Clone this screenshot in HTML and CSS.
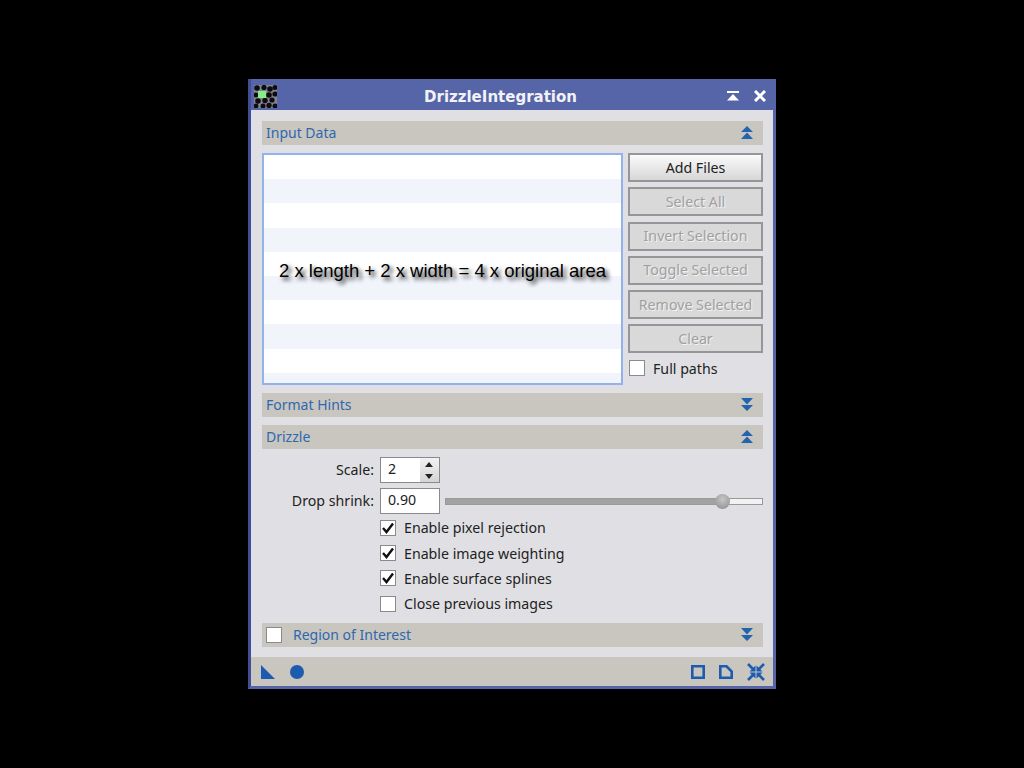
FILE: index.html
```html
<!DOCTYPE html>
<html lang="en">
<head>
  <meta charset="UTF-8" />
  <title>DrizzleIntegration</title>
  <link rel="stylesheet" href="styles.css">
</head>
<body>

  <div class="window">
    <div class="titlebar">
      <svg class="app-icon" width="23" height="23" viewBox="0 0 23 23">
        <rect width="23" height="23" fill="#84848f"/>
        <g fill="#0c0c10">
          <circle cx="3" cy="3" r="2.800"/><circle cx="10" cy="2.500" r="2.600"/><circle cx="16" cy="4" r="2.800"/><circle cx="21" cy="2.500" r="2.500"/>
          <circle cx="2" cy="10" r="2.400"/><circle cx="15" cy="10" r="2.800"/><circle cx="21" cy="9" r="2.600"/>
          <circle cx="4" cy="16" r="2.800"/><circle cx="11" cy="15.500" r="2.700"/><circle cx="18" cy="15" r="2.600"/>
          <circle cx="2" cy="21" r="2.400"/><circle cx="9" cy="21" r="2.500"/><circle cx="15" cy="20.500" r="2.700"/><circle cx="21" cy="21" r="2.500"/>
        </g>
        <rect x="4" y="6" width="8" height="7" fill="#86ee86"/>
      </svg>
      <span class="title">DrizzleIntegration</span>
      <svg class="shade-btn" width="12" height="10" viewBox="0 0 12 10">
        <path fill="#fff" d="M0 0H12V2H0Z M6 3L12 9.500H0Z"/>
      </svg>
      <svg width="12" height="12" viewBox="0 0 12 12">
        <path stroke="#fff" stroke-width="3" d="M1 1L11 11M11 1L1 11"/>
      </svg>
    </div>

    <div class="content">
      <div class="section-bar">
        <span class="section-title">Input Data</span>
        <svg width="12" height="13" viewBox="0 0 12 13"><path fill="#2463ad" d="M6 0L12 6H0Z M6 6.500L12 13H0Z"/></svg>
      </div>

      <div class="input-data">
        <div class="file-list">
          <div class="overlay-text">2 x length + 2 x width = 4 x original area</div>
        </div>
        <div class="side">
          <button class="btn">Add Files</button>
          <button class="btn" disabled>Select All</button>
          <button class="btn" disabled>Invert Selection</button>
          <button class="btn" disabled>Toggle Selected</button>
          <button class="btn" disabled>Remove Selected</button>
          <button class="btn" disabled>Clear</button>
          <div class="check-row full-paths"><span class="check"></span><span>Full paths</span></div>
        </div>
      </div>

      <div class="section-bar">
        <span class="section-title">Format Hints</span>
        <svg width="12" height="13" viewBox="0 0 12 13"><path fill="#2463ad" d="M0 0H12L6 6.500Z M0 7H12L6 13Z"/></svg>
      </div>

      <div class="section-bar">
        <span class="section-title">Drizzle</span>
        <svg width="12" height="13" viewBox="0 0 12 13"><path fill="#2463ad" d="M6 0L12 6H0Z M6 6.500L12 13H0Z"/></svg>
      </div>

      <div class="drizzle">
        <div class="field-row">
          <label class="field-label">Scale:</label>
          <div class="spin">
            <span class="field-value">2</span>
            <div class="spin-btns">
              <span class="spin-up"></span>
              <span class="spin-down"></span>
            </div>
          </div>
        </div>
        <div class="field-row shrink-row">
          <label class="field-label">Drop shrink:</label>
          <div class="spin"><span class="field-value">0.90</span></div>
          <div class="slider">
            <div class="slider-fill"></div>
            <div class="slider-handle"></div>
          </div>
        </div>
        <div class="checks">
          <div class="check-row"><span class="check"><svg width="14" height="12" viewBox="0 0 14 12"><path fill="none" stroke="#111" stroke-width="2.400" d="M2 6L5.500 10L12 1.500"/></svg></span><span>Enable pixel rejection</span></div>
          <div class="check-row"><span class="check"><svg width="14" height="12" viewBox="0 0 14 12"><path fill="none" stroke="#111" stroke-width="2.400" d="M2 6L5.500 10L12 1.500"/></svg></span><span>Enable image weighting</span></div>
          <div class="check-row"><span class="check"><svg width="14" height="12" viewBox="0 0 14 12"><path fill="none" stroke="#111" stroke-width="2.400" d="M2 6L5.500 10L12 1.500"/></svg></span><span>Enable surface splines</span></div>
          <div class="check-row"><span class="check"></span><span>Close previous images</span></div>
        </div>
      </div>

      <div class="section-bar roi-bar">
        <span class="check"></span>
        <span class="section-title">Region of Interest</span>
        <svg width="12" height="13" viewBox="0 0 12 13"><path fill="#2463ad" d="M0 0H12L6 6.500Z M0 7H12L6 13Z"/></svg>
      </div>
    </div>

    <div class="footer">
      <svg width="14" height="14" viewBox="0 0 14 14"><path fill="#1d5bb0" d="M0 0L14 14H0Z"/></svg>
      <svg class="dot" width="14" height="14" viewBox="0 0 14 14"><circle cx="7" cy="7" r="7" fill="#1d5bb0"/></svg>
      <div class="footer-right">
        <svg width="14" height="14" viewBox="0 0 14 14"><path fill="none" stroke="#1d5bb0" stroke-width="2.600" d="M1.300 1.300H12.700V12.700H1.300Z"/></svg>
        <svg width="14" height="14" viewBox="0 0 14 14"><path fill="none" stroke="#1d5bb0" stroke-width="2.600" d="M1.300 1.300H7.500L12.700 6.500V12.700H1.300Z"/></svg>
        <svg width="18" height="18" viewBox="0 0 18 18">
          <path fill="none" stroke="#1d5bb0" stroke-width="2.600" d="M1 1L7 7M17 1L11 7M1 17L7 11M17 17L11 11"/>
          <path fill="#1d5bb0" d="M8.500 8.500V2.500L2.500 8.500Z M9.500 8.500V2.500L15.500 8.500Z M8.500 9.500V15.500L2.500 9.500Z M9.500 9.500V15.500L15.500 9.500Z"/>
        </svg>
      </div>
    </div>
  </div>

</body>
</html>
```

FILE: styles.css
```css
body {
  margin: 0;
  height: 768px;
  box-sizing: border-box;
  padding: 79px 0 0 248px;
  background: #000;
  font-family: 'Noto Sans', sans-serif;
  font-size: 14.200px;
  color: #222;
  overflow: hidden;
}

.window {
  width: 528px;
  height: 610px;
  box-sizing: border-box;
  display: flex;
  flex-direction: column;
  background: #e0e0e4;
  border: 3px solid #5565a8;
  border-top: none;
  border-left-color: #3f4e96;
}

.titlebar {
  height: 31px;
  box-sizing: border-box;
  flex: none;
  display: flex;
  align-items: center;
  gap: 13px;
  padding: 3px 7px 0 3px;
  background: #5565a8;
}

.app-icon {
  flex: none;
}

.shade-btn {
  margin-right: 2px;
}

.title {
  flex: 1;
  text-align: center;
  color: #f2f2f6;
  font-family: 'DejaVu Sans', sans-serif;
  font-weight: bold;
  font-size: 15px;
  padding: 1px 3px 0 0;
}

.content {
  flex: 1;
  padding: 11px 10px 0 11px;
}

.section-bar {
  height: 24px;
  box-sizing: border-box;
  display: flex;
  align-items: center;
  padding: 0 10px 1px 4px;
  margin-bottom: 8px;
  background: #c8c6be;
}

.section-title {
  flex: 1;
  color: #2f68b0;
  font-size: 14px;
}

.input-data {
  display: flex;
  gap: 5px;
  height: 232px;
  margin-bottom: 8px;
}

.file-list {
  position: relative;
  width: 361px;
  box-sizing: border-box;
  border: 2px solid #92b2e9;
  background: repeating-linear-gradient(#fff 0, #fff 24.2px, #f1f4fb 24.2px, #f1f4fb 48.4px);
}

.overlay-text {
  position: absolute;
  left: 0;
  right: 0;
  top: 105px;
  text-align: center;
  font-family: 'Liberation Sans', sans-serif;
  font-size: 18.500px;
  color: #000;
  text-shadow: 3px 3px 4px #222;
}

.side {
  width: 135px;
  display: flex;
  flex-direction: column;
  gap: 5.300px;
}

.btn {
  height: 29px;
  padding: 0 0 1px;
  border: 2px solid #969696;
  background: linear-gradient(#fbfbfb, #d6d6d6);
  font-family: 'Noto Sans', sans-serif;
  font-size: 14.200px;
  color: #222;
}

.btn:disabled {
  background: #d9d9da;
  color: #a0a0a0;
  text-shadow: 1px 1px 0 #f2f2f2;
}

.check-row {
  display: flex;
  align-items: center;
  gap: 8px;
  height: 25.400px;
}

.full-paths {
  height: 19px;
  margin-left: 1px;
}

.check {
  width: 16px;
  height: 16px;
  box-sizing: border-box;
  flex: none;
  display: flex;
  align-items: center;
  justify-content: center;
  background: #fff;
  border: 1px solid #8a8a8a;
}

.drizzle {
  height: 166px;
}

.field-row {
  display: flex;
  align-items: center;
  gap: 5px;
  height: 26px;
}

.shrink-row {
  margin-top: 5px;
}

.field-label {
  width: 112px;
  text-align: right;
  margin: 0 1px 2px 0;
}

.spin {
  width: 60px;
  height: 26px;
  box-sizing: border-box;
  flex: none;
  display: flex;
  background: #fff;
  border: 1px solid #8a8a8a;
}

.field-value {
  flex: 1;
  padding-left: 7px;
  line-height: 22px;
}

.spin-btns {
  width: 19px;
  display: flex;
  flex-direction: column;
  background: linear-gradient(#f2f2f2, #d4d4d4);
}

.spin-up,
.spin-down {
  flex: 1;
  position: relative;
}

.spin-up::after,
.spin-down::after {
  content: "";
  position: absolute;
  left: 5px;
  top: 4px;
  border-left: 4.500px solid transparent;
  border-right: 4.500px solid transparent;
}

.spin-up::after {
  border-bottom: 5px solid #222;
}

.spin-down::after {
  border-top: 5px solid #222;
}

.slider {
  flex: 1;
  position: relative;
  height: 7px;
  box-sizing: border-box;
  border: 1px solid #9a9a9a;
  background: #f2f2f2;
}

.slider-fill {
  width: 277px;
  height: 100%;
  background: #a2a2a2;
}

.slider-handle {
  position: absolute;
  left: 269px;
  top: -5px;
  width: 15px;
  height: 15px;
  border-radius: 50%;
  background: radial-gradient(circle at 50% 35%, #c6c6c6, #8a8a8a);
}

.checks {
  margin: 1px 0 0 118px;
}

.roi-bar {
  gap: 11px;
}

.footer {
  height: 29px;
  flex: none;
  display: flex;
  align-items: center;
  padding: 0 8px 0 10px;
  background: #c8c6be;
}

.dot {
  margin-left: 15px;
}

.footer-right {
  margin-left: auto;
  display: flex;
  align-items: center;
  gap: 14px;
}
```
